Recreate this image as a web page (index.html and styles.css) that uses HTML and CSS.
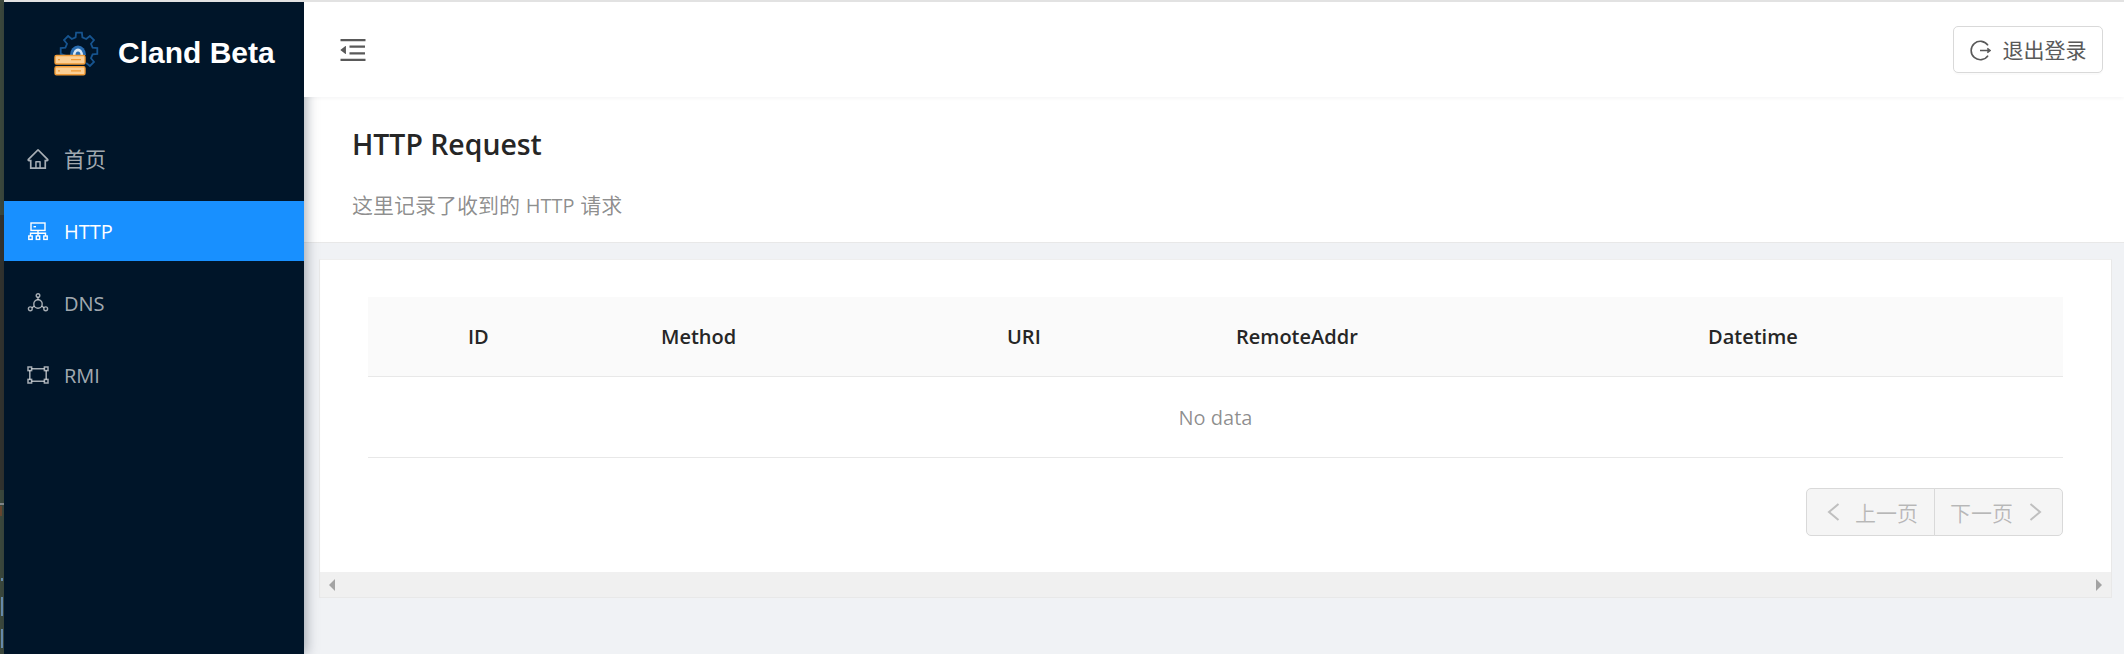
FILE: index.html
```html
<!DOCTYPE html>
<html>
	<head>
		<title>Cland Beta</title>
		<link rel="stylesheet" href="styles.css">
	</head>
	<body>
		<div class="desktop-strip">
			<span class="tick tick-grey"></span>
			<span class="tick tick-brown"></span>
			<span class="tick tick-a"></span>
			<span class="tick tick-b"></span>
			<span class="tick tick-c"></span>
		</div>
		<div class="sider">
			<div class="logo">
				<svg class="logo-icon" viewBox="0 0 46 46">
					<path d="M12.8 25.8 L7.7 23.9 L7.7 18.1 L12.4 17.6 L14 13.8 L11 10.1 L15.1 6 L18.8 9 L22.6 7.4 L23.1 2.7 L28.9 2.7 L29.4 7.4 L33.2 9 L36.9 6 L41 10.1 L38 13.8 L39.6 17.6 L44.3 18.1 L44.3 23.9 L39.6 24.4 L38 28.2 L41 31.9 L36.9 36 L33.2 33" fill="none" stroke="#16548f" stroke-width="1.8"/>
					<path d="M17 25 A8 9.5 0 0 1 33 25 Z" fill="#2a6db0"/>
					<path d="M20 25 A5 6.5 0 0 1 30 25 Z" fill="#dbe8f4"/>
					<path d="M22.5 25 A2.5 3.5 0 0 1 27.5 25 Z" fill="#2a6db0"/>
					<rect x="2" y="25.5" width="30" height="8.5" rx="1.5" fill="#fbcf95" stroke="#f09a35" stroke-width="1.4"/>
					<rect x="2" y="36.8" width="30" height="8" rx="1.5" fill="#fbcf95" stroke="#f09a35" stroke-width="1.4"/>
					<path d="M18 29.7 H28 M18 40.8 H28 M5 29.7 H7 M5 40.8 H7" stroke="#f09a35" stroke-width="1.3"/>
				</svg>
				<span class="logo-text">Cland Beta</span>
			</div>
			<ul class="menu">
				<li class="menu-item">
					<svg class="menu-icon" viewBox="0 0 1024 1024" fill="currentColor"><path d="M946.5 505L560.1 118.8l-25.9-25.9a31.5 31.5 0 0 0-44.4 0L77.5 505a63.9 63.9 0 0 0-18.8 46c.4 35.2 29.7 63.3 64.9 63.3h42.5V940h691.8V614.3h43.4c17.1 0 33.2-6.7 45.3-18.8a63.6 63.6 0 0 0 18.7-45.3c0-17-6.7-33.1-18.8-45.2zM568 868H456V664h112v204zm217.9-325.7V868H632V640c0-22.1-17.9-40-40-40H432c-22.1 0-40 17.9-40 40v228H238.1V542.3h-96l370-369.7 23.1 23.1L882 542.3h-96.1z"/></svg>
					<span class="cjk">首页</span>
				</li>
				<li class="menu-item selected">
					<svg class="menu-icon" viewBox="-2 -2 24 24" fill="none" stroke="currentColor" stroke-width="1.4">
						<rect x="3" y="2" width="14" height="7.4"/>
						<path d="M5.5 5.7 H8"/>
						<path d="M10 9.4 V15 M2.5 15 V12.3 H17.5 V15"/>
						<rect x="0.8" y="15" width="3.4" height="3.4"/>
						<rect x="8.3" y="15" width="3.4" height="3.4"/>
						<rect x="15.8" y="15" width="3.4" height="3.4"/>
					</svg>
					<span>HTTP</span>
				</li>
				<li class="menu-item">
					<svg class="menu-icon" viewBox="-2 -2 24 24" fill="none" stroke="currentColor" stroke-width="1.4">
						<circle cx="10" cy="2.5" r="1.8"/>
						<circle cx="2.3" cy="15.8" r="1.9"/>
						<circle cx="17.7" cy="15.8" r="1.9"/>
						<circle cx="10" cy="11" r="4.2"/>
						<path d="M10 4.3 V6.8 M6.3 13 L4 14.8 M13.7 13 L16 14.8"/>
					</svg>
					<span>DNS</span>
				</li>
				<li class="menu-item">
					<svg class="menu-icon" viewBox="-2 -2 24 24" fill="none" stroke="currentColor" stroke-width="1.5">
						<rect x="0" y="2" width="3.6" height="3.6"/>
						<rect x="16.4" y="2" width="3.6" height="3.6"/>
						<rect x="0" y="14.4" width="3.6" height="3.6"/>
						<rect x="16.4" y="14.4" width="3.6" height="3.6"/>
						<path d="M3.6 3.8 H16.4 M3.6 16.2 H16.4 M1.8 5.6 V14.4 M18.2 5.6 V14.4"/>
					</svg>
					<span>RMI</span>
				</li>
			</ul>
		</div>
		<div class="main">
			<div class="header">
				<svg class="fold-icon" viewBox="0 0 1024 1024" fill="currentColor"><path d="M408 442h480c4.4 0 8-3.6 8-8v-56c0-4.4-3.6-8-8-8H408c-4.4 0-8 3.6-8 8v56c0 4.4 3.6 8 8 8zm-8 204c0 4.4 3.6 8 8 8h480c4.4 0 8-3.6 8-8v-56c0-4.4-3.6-8-8-8H408c-4.4 0-8 3.6-8 8v56zm504-486H120c-4.4 0-8 3.6-8 8v56c0 4.4 3.6 8 8 8h784c4.4 0 8-3.6 8-8v-56c0-4.4-3.6-8-8-8zm0 632H120c-4.4 0-8 3.6-8 8v56c0 4.4 3.6 8 8 8h784c4.4 0 8-3.6 8-8v-56c0-4.4-3.6-8-8-8zM115.4 518.9L271.7 642c5.8 4.6 14.4.5 14.4-6.9V388.9c0-7.4-8.5-11.5-14.4-6.9L115.4 505.1a8.74 8.74 0 0 0 0 13.8z"/></svg>
				<button class="logout">
					<svg class="logout-icon" viewBox="0 0 21 21" fill="none" stroke="currentColor" stroke-width="1.6">
						<path d="M18 5.4 A9.2 9.2 0 1 0 18 15.6"/>
						<path d="M10 10.5 H20 M17.3 8.3 L20 10.5 L17.3 12.7"/>
					</svg>
					<span class="cjk raised">退出登录</span>
				</button>
			</div>
			<div class="page-header">
				<h1 class="page-title">HTTP Request</h1>
				<p class="page-desc cjk">这里记录了收到的 <span class="latin">HTTP</span> 请求</p>
			</div>
			<div class="content">
				<div class="card">
					<div class="card-body">
						<div class="table-row table-head">
							<span>ID</span>
							<span>Method</span>
							<span>URI</span>
							<span>RemoteAddr</span>
							<span>Datetime</span>
						</div>
						<div class="table-empty">No data</div>
						<div class="pager">
							<div class="pager-btn">
								<svg class="chevron" viewBox="0 0 13 20"><path d="M11.5 2 L2 10 L11.5 18"/></svg>
								<span class="cjk">上一页</span>
							</div>
							<div class="pager-btn">
								<span class="cjk">下一页</span>
								<svg class="chevron" viewBox="0 0 13 20"><path d="M1.5 2 L11 10 L1.5 18"/></svg>
							</div>
						</div>
					</div>
					<div class="scrollbar">
						<span class="arrow-left"></span>
						<span class="arrow-right"></span>
					</div>
				</div>
			</div>
		</div>
	</body>
</html>
```

FILE: styles.css
```css
* {
	box-sizing: border-box;
}

html, body {
	height: 100%;
}

body {
	margin: 0;
	display: flex;
	overflow: hidden;
	background-color: #f0f2f5;
	color: #262626;
	font-family: "Open Sans", "Noto Sans CJK SC", sans-serif;
	font-size: 20px;
}

.cjk {
	font-family: "Noto Sans CJK SC", sans-serif;
	font-size: 21px;
}

.latin {
	font-family: "Open Sans", sans-serif;
	font-size: 20px;
}

.raised, .menu-item .cjk {
	margin-bottom: 2px;
}

.desktop-strip {
	position: relative;
	width: 4px;
	flex: none;
	background: linear-gradient(to bottom, #3f4b3e 215px, #35352f 215px, #35352f 490px, #3f4b3e 490px);
}

.tick {
	position: absolute;
	left: 1px;
	width: 2px;
	background-color: #6f96b8;
}

.tick-grey { top: 503px; height: 2px; left: 0; width: 4px; background-color: #8c9091; }
.tick-brown { top: 506px; height: 10px; left: 0; background-color: #6e4a30; }
.tick-a { top: 578px; height: 3px; }
.tick-b { top: 597px; height: 19px; }
.tick-c { top: 629px; height: 19px; }

.sider {
	width: 300px;
	flex: none;
	position: relative;
	z-index: 1;
	border-top: 2px solid #e2e2e2;
	background-color: #001529;
	box-shadow: 2px 0 12px rgba(0, 21, 41, 0.35);
}

.logo {
	height: 95px;
	padding: 7px 0 0 49px;
	display: flex;
	align-items: center;
	gap: 19px;
}

.logo-icon {
	width: 46px;
	height: 46px;
	flex: none;
}

.logo-text {
	color: #ffffff;
	font-family: "Liberation Sans", sans-serif;
	font-weight: 700;
	font-size: 30px;
}

.menu {
	list-style: none;
	margin: 0;
	padding: 32px 0 0;
	display: flex;
	flex-direction: column;
	gap: 12px;
}

.menu-item {
	height: 60px;
	padding-left: 22px;
	display: flex;
	align-items: center;
	gap: 14px;
	color: rgba(255, 255, 255, 0.65);
}

.menu-item.selected {
	background-color: #1890ff;
	color: #ffffff;
}

.menu-icon {
	width: 24px;
	height: 24px;
	flex: none;
}

.main {
	flex: 1;
	min-width: 0;
	display: flex;
	flex-direction: column;
}

.header {
	position: relative;
	z-index: 2;
	height: 97px;
	padding: 0 21px 0 33px;
	display: flex;
	align-items: center;
	justify-content: space-between;
	border-top: 2px solid #e2e2e2;
	background-color: #ffffff;
	box-shadow: 0 1px 4px rgba(0, 21, 41, 0.05);
}

.fold-icon {
	width: 32px;
	height: 32px;
	color: #595959;
}

.logout {
	width: 150px;
	height: 47px;
	display: flex;
	align-items: center;
	justify-content: center;
	gap: 12px;
	border: 1px solid #d9d9d9;
	border-radius: 5px;
	background-color: #ffffff;
	box-shadow: 0 2px 0 rgba(0, 0, 0, 0.015);
	color: #595959;
}

.logout-icon {
	width: 21px;
	height: 21px;
	margin-top: 2px;
	flex: none;
}

.page-header {
	height: 146px;
	padding: 29px 48px 0;
	background-color: #ffffff;
	border-bottom: 1px solid #e8e8e8;
}

.page-title {
	margin: 0;
	font-size: 28.4px;
	font-weight: 600;
	line-height: 36px;
	color: #262626;
}

.page-desc {
	margin: 24px 0 0;
	line-height: 36px;
	word-spacing: 1px;
	color: rgba(0, 0, 0, 0.45);
}

.content {
	padding: 16px 12px 0 15px;
}

.card {
	height: 339px;
	display: flex;
	flex-direction: column;
	background-color: #ffffff;
	border: 1px solid #e8e8e8;
	border-top-color: #eeeeee;
}

.card-body {
	flex: 1;
	padding: 37px 48px 0 48px;
}

.table-row {
	display: grid;
	grid-template-columns: 193px 346px 229px 472px 1fr;
	padding-left: 100px;
}

.table-head {
	height: 80px;
	align-items: center;
	background-color: #fafafa;
	border-bottom: 1px solid #e8e8e8;
	font-weight: 600;
}

.table-empty {
	height: 81px;
	display: flex;
	align-items: center;
	justify-content: center;
	border-bottom: 1px solid #e8e8e8;
	color: rgba(0, 0, 0, 0.45);
}

.pager {
	margin-top: 30px;
	display: flex;
	justify-content: flex-end;
}

.pager-btn {
	width: 129px;
	height: 48px;
	padding: 0 16px 0 20px;
	display: flex;
	align-items: center;
	justify-content: space-between;
	border: 1px solid #d9d9d9;
	background-color: #f5f5f5;
	color: rgba(0, 0, 0, 0.25);
	border-radius: 5px 0 0 5px;
}

.pager-btn + .pager-btn {
	margin-left: -1px;
	padding: 0 20px 0 15px;
	border-radius: 0 5px 5px 0;
}

.chevron {
	width: 13px;
	height: 20px;
	flex: none;
	fill: none;
	stroke: #bfbfbf;
	stroke-width: 2;
}

.scrollbar {
	height: 25px;
	display: flex;
	align-items: center;
	justify-content: space-between;
	padding: 0 9px;
	background-color: #f0f0f0;
}

.arrow-left {
	border: 6px solid transparent;
	border-left-width: 0;
	border-right-color: #a3a3a3;
}

.arrow-right {
	border: 6px solid transparent;
	border-right-width: 0;
	border-left-color: #a3a3a3;
}
```
